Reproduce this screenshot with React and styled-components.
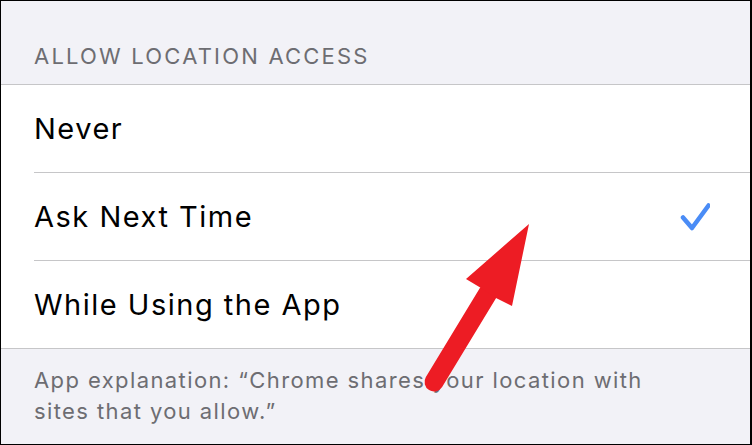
import styled, { createGlobalStyle } from "styled-components";

const Global = createGlobalStyle`
  html, body {
    margin: 0;
    padding: 0;
    background: #fff;
  }
  * {
    box-sizing: border-box;
  }
`;

const Frame = styled.div`
  position: relative;
  width: 752px;
  height: 445px;
  overflow: hidden;
  background: #f2f2f7;
  border-style: solid;
  border-color: #000;
  border-width: 1px 2px 1px 1px;
  display: flex;
  flex-direction: column;
  font-family: Inter, "Liberation Sans", sans-serif;
`;

const SectionHeader = styled.div`
  height: 83px;
  display: flex;
  align-items: flex-end;
  padding: 0 0 15px 33px;
  font-size: 22px;
  line-height: 26px;
  color: #6d6d72;
  letter-spacing: 2.2px;
`;

const Group = styled.div`
  background: #fff;
  border-top: 1px solid #c6c6c8;
  border-bottom: 1px solid #c6c6c8;
`;

const Row = styled.div`
  padding-left: 33px;
`;

const RowInner = styled.div`
  height: ${({ $last }) => ($last ? "87px" : "88px")};
  display: flex;
  align-items: center;
  justify-content: space-between;
  padding-right: 40px;
  border-bottom: ${({ $last }) => ($last ? "none" : "1px solid #c6c6c8")};
  font-size: 29px;
  letter-spacing: 1.5px;
  color: #000;
`;

const Footer = styled.div`
  padding: 16px 50px 0 33px;
  font-size: 22px;
  line-height: 31px;
  letter-spacing: 1.4px;
  color: #6d6d72;
`;

const Overlay = styled.svg`
  position: absolute;
  left: 0;
  top: 0;
  pointer-events: none;
`;

function Check() {
  return (
    <svg width="30" height="28" viewBox="0 0 30 28">
      <path
        d="M3 14.5 L12 25 L28.5 2.5"
        fill="none"
        stroke="#4a8cf6"
        strokeWidth="4.5"
        strokeLinecap="round"
        strokeLinejoin="round"
      />
    </svg>
  );
}

const options = [
  { label: "Never" },
  { label: "Ask Next Time", selected: true },
  { label: "While Using the App" },
];

export default function App() {
  return (
    <>
      <Global />
      <Frame>
        <SectionHeader>ALLOW LOCATION ACCESS</SectionHeader>
        <Group>
          {options.map((o, i) => (
            <Row key={o.label}>
              <RowInner $last={i === options.length - 1}>
                <span>{o.label}</span>
                {o.selected && <Check />}
              </RowInner>
            </Row>
          ))}
        </Group>
        <Footer>
          App explanation: “Chrome shares your location with sites that you allow.”
        </Footer>
        <Overlay width="752" height="445" viewBox="0 0 752 445">
          <line
            x1="487"
            y1="292"
            x2="433"
            y2="381"
            stroke="#ed1c24"
            strokeWidth="19"
            strokeLinecap="round"
          />
          <polygon
            points="528,223 465,278 480,287 495,297 511,305"
            fill="#ed1c24"
          />
        </Overlay>
      </Frame>
    </>
  );
}
